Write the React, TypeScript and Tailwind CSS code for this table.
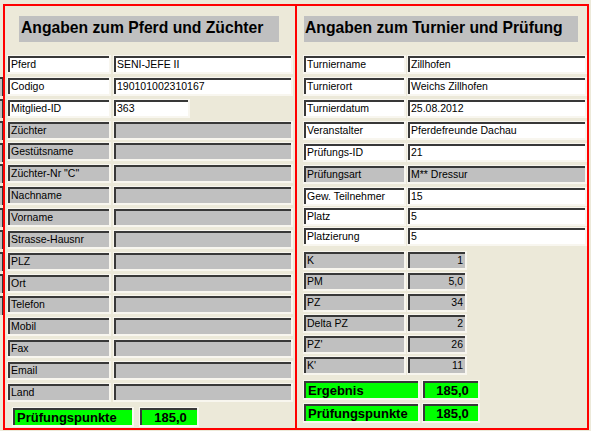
import React from "react";

const OUT = "border-t border-l border-b-2 border-r-2 border-[#f8f6ef] shrink-0";
const IN = "h-[16px] border-t-2 border-l-2 border-[#383838] pl-px text-[10.5px] leading-[13px] whitespace-nowrap overflow-hidden text-black";

function Cell({ w, gray, right, children }: { w: string; gray?: boolean; right?: boolean; children?: React.ReactNode }) {
  return (
    <div className={`${OUT} ${w}`}>
      <div className={`${IN} ${gray ? "bg-[#c0c0c0]" : "bg-white"} ${right ? "text-right pr-[2px]" : ""}`}>{children}</div>
    </div>
  );
}

function Green({ w, center, children }: { w: string; center?: boolean; children?: React.ReactNode }) {
  return (
    <div className={`${OUT} ${w}`}>
      <div className={`h-[17px] border-t-2 border-l-2 border-[#383838] bg-[#00ff00] pl-[2px] text-[13px] leading-[15px] font-bold whitespace-nowrap text-black ${center ? "text-center" : ""}`}>
        {children}
      </div>
    </div>
  );
}

const leftRows: [string, string, boolean, boolean?][] = [
  ["Pferd", "SENI-JEFE II", false],
  ["Codigo", "190101002310167", false],
  ["Mitglied-ID", "363", false, true],
  ["Züchter", "", true],
  ["Gestütsname", "", true],
  ["Züchter-Nr \"C\"", "", true],
  ["Nachname", "", true],
  ["Vorname", "", true],
  ["Strasse-Hausnr", "", true],
  ["PLZ", "", true],
  ["Ort", "", true],
  ["Telefon", "", true],
  ["Mobil", "", true],
  ["Fax", "", true],
  ["Email", "", true],
  ["Land", "", true],
];

const rightTop: [string, string, boolean][] = [
  ["Turniername", "Zillhofen", false],
  ["Turnierort", "Weichs Zillhofen", false],
  ["Turnierdatum", "25.08.2012", false],
  ["Veranstalter", "Pferdefreunde Dachau", false],
  ["Prüfungs-ID", "21", false],
  ["Prüfungsart", "M** Dressur", true],
];

const rightMid: [string, string][] = [
  ["Gew. Teilnehmer", "15"],
  ["Platz", "5"],
  ["Platzierung", "5"],
];

const scores: [string, string][] = [
  ["K", "1"],
  ["PM", "5,0"],
  ["PZ", "34"],
  ["Delta PZ", "2"],
  ["PZ'", "26"],
  ["K'", "11"],
];

export default function App() {
  return (
    <div className="w-[591px] h-[431px] bg-[#ece9d9] flex overflow-hidden font-['Liberation_Sans',Arial,sans-serif]">
      {/* clipped fields at far left */}
      <div className="w-[3px] shrink-0 pt-[77px] flex flex-col gap-[2.87px]">
        {Array.from({ length: 11 }).map((_, i) => (
          <div key={i} className="h-[19px] border-t-2 border-r border-[#383838] bg-[#c0c0c0]" />
        ))}
      </div>

      <div className="mt-[4px] h-[426px] w-[586px] shrink-0 flex border-2 border-[#ff0000]">
        {/* left panel */}
        <div className="w-[290px] shrink-0 flex flex-col">
          <div className="mt-[10px] ml-[14px] w-[260px] h-[26px] bg-[#c0c0c0] pl-[2px] text-[15.7px] leading-[24px] font-bold text-black whitespace-nowrap">
            Angaben zum Pferd und Züchter
          </div>
          <div className="mt-[13px] pl-[2px] flex flex-col gap-[2.87px]">
            {leftRows.map(([l, v, g, short]) => (
              <div key={l} className="flex gap-[2px]">
                <Cell w="w-[104px]" gray={g}>{l}</Cell>
                <Cell w={short ? "w-[77px]" : "w-[180px]"} gray={g}>{v}</Cell>
              </div>
            ))}
          </div>
          <div className="mt-[5px] pl-[7px] flex gap-[5px]">
            <Green w="w-[122px]">Prüfungspunkte</Green>
            <Green w="w-[60px]" center>185,0</Green>
          </div>
        </div>

        <div className="w-[2px] shrink-0 bg-[#ff0000]" />

        {/* right panel */}
        <div className="w-[290px] shrink-0 flex flex-col">
          <div className="mt-[10px] ml-[7px] w-[274px] h-[26px] bg-[#c0c0c0] pl-[1px] text-[15.7px] leading-[24px] font-bold text-black whitespace-nowrap">
            Angaben zum Turnier und Prüfung
          </div>
          <div className="mt-[13px] pl-[6px] flex flex-col gap-[3px]">
            {rightTop.map(([l, v, g]) => (
              <div key={l} className="flex gap-[1px]">
                <Cell w="w-[103px]" gray={g}>{l}</Cell>
                <Cell w="w-[180px]" gray={g}>{v}</Cell>
              </div>
            ))}
          </div>
          <div className="mt-[3px] pl-[6px] flex flex-col gap-[1px]">
            {rightMid.map(([l, v]) => (
              <div key={l} className="flex gap-[1px]">
                <Cell w="w-[103px]">{l}</Cell>
                <Cell w="w-[180px]">{v}</Cell>
              </div>
            ))}
          </div>
          <div className="mt-[5px] pl-[6px] flex flex-col gap-[2px]">
            {scores.map(([l, v]) => (
              <div key={l} className="flex gap-[1px]">
                <Cell w="w-[103px]" gray>{l}</Cell>
                <Cell w="w-[60px]" gray right>{v}</Cell>
              </div>
            ))}
          </div>
          <div className="mt-[5px] pl-[6px] flex flex-col gap-[3px]">
            <div className="flex gap-[2px]">
              <Green w="w-[117px]">Ergebnis</Green>
              <Green w="w-[58px]" center>185,0</Green>
            </div>
            <div className="flex gap-[2px]">
              <Green w="w-[117px]">Prüfungspunkte</Green>
              <Green w="w-[58px]" center>185,0</Green>
            </div>
          </div>
        </div>
      </div>
    </div>
  );
}
